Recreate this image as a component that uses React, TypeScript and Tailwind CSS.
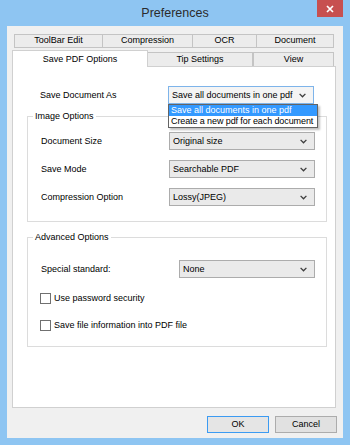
import React from "react";

const tabsTop = [
  { label: "ToolBar Edit", w: "w-[88px]" },
  { label: "Compression", w: "w-[90px]" },
  { label: "OCR", w: "w-[64px]" },
  { label: "Document", w: "w-[78px]" },
];

function Chevron() {
  return (
    <svg width="7" height="5" viewBox="0 0 7 5">
      <path d="M0.6 0.9 L3.5 3.8 L6.4 0.9" stroke="#3c3c3c" strokeWidth="1.3" fill="none" />
    </svg>
  );
}

function Combo({ value, w, focused }: { value: string; w: string; focused?: boolean }) {
  return (
    <div
      className={`flex h-[18px] ${w} items-center justify-between border pl-[3px] pr-[7px] ${
        focused ? "border-[#7eb4ea] bg-[#f4f4f4]" : "border-[#acacac] bg-[#eaeaea]"
      }`}
    >
      <span className="whitespace-nowrap leading-none">{value}</span>
      <Chevron />
    </div>
  );
}

function Row({ label, value, lw = "w-[128px]", w = "w-[146px]" }: { label: string; value: string; lw?: string; w?: string }) {
  return (
    <div className="flex items-center pl-[13px]">
      <span className={`${lw} leading-none`}>{label}</span>
      <Combo value={value} w={w} />
    </div>
  );
}

function Check({ label }: { label: string }) {
  return (
    <div className="flex h-[13px] items-center pl-[12px]">
      <div className="h-[11px] w-[11px] border border-[#707070] bg-white" />
      <span className="ml-[3px] leading-none">{label}</span>
    </div>
  );
}

export default function App() {
  return (
    <div className="flex h-[445px] w-[350px] flex-col bg-[#8ec5f2] font-['Liberation_Sans',Arial,sans-serif] text-[9px] text-black">
      {/* title bar */}
      <div className="flex h-[26px] shrink-0 items-start">
        <div className="w-[33px]" />
        <div className="flex h-[26px] flex-1 items-center justify-center text-[12.5px] text-[#2b2b2b]">Preferences</div>
        <div className="mr-[7px] flex h-[17px] w-[26px] items-center justify-center bg-[#c75050]">
          <svg width="8" height="8" viewBox="0 0 8 8">
            <path d="M1 1 L7 7 M7 1 L1 7" stroke="#fff" strokeWidth="1.7" />
          </svg>
        </div>
      </div>

      {/* client */}
      <div className="mx-[7px] mb-[7px] flex flex-1 flex-col bg-[#f0f0f0] pt-[8px]">
        <div className="ml-[5px] w-[324px]">
          {/* tab row 1 */}
          <div className="ml-[2px] flex h-[14px]">
            {tabsTop.map((t) => (
              <div
                key={t.label}
                className={`${t.w} flex items-center justify-center border border-r-0 border-[#c4c4c4] bg-[#ececec] last:border-r`}
              >
                {t.label}
              </div>
            ))}
          </div>
          {/* tab row 2 */}
          <div className="mt-[2px] flex h-[16px] items-end">
            <div className="relative z-10 -mb-px flex h-[17px] w-[136px] items-start justify-center border border-b-0 border-[#d0d0d0] bg-white pt-[2px]">
              Save PDF Options
            </div>
            <div className="flex h-[14px] w-[105px] items-center justify-center border border-b-0 border-l-0 border-[#c4c4c4] bg-[#ececec]">
              Tip Settings
            </div>
            <div className="flex h-[14px] w-[81px] items-center justify-center border border-b-0 border-[#c4c4c4] bg-[#ececec]">
              View
            </div>
          </div>

          {/* panel */}
          <div className="flex h-[342px] flex-col border border-[#d0d0d0] bg-white pl-[14px] pt-[19px]">
            <div className="flex items-center pl-[13px]">
              <span className="w-[128px] leading-none">Save Document As</span>
              <div className="relative">
                <Combo value="Save all documents in one pdf" w="w-[146px]" focused />
                <div className="absolute left-0 top-[18px] z-20 w-[150px] overflow-hidden whitespace-nowrap border border-[#646464] bg-white shadow-[2px_2px_2px_rgba(0,0,0,0.25)]">
                  <div className="flex h-[11px] items-center bg-[#3399ff] pl-[2px] leading-none text-white">Save all documents in one pdf</div>
                  <div className="flex h-[11px] items-center pl-[2px] leading-none tracking-[-0.1px]">Create a new pdf for each document</div>
                </div>
              </div>
            </div>

            <fieldset className="mt-[7px] h-[111px] w-[300px] border border-[#dcdcdc] pt-[10px]">
              <legend className="ml-[5px] px-[2px] leading-[11px]">Image Options</legend>
              <div className="flex flex-col gap-[10px]">
                <Row label="Document Size" value="Original size" />
                <Row label="Save Mode" value="Searchable PDF" />
                <Row label="Compression Option" value="Lossy(JPEG)" />
              </div>
            </fieldset>

            <fieldset className="mt-[10px] h-[115px] w-[300px] border border-[#dcdcdc] pt-[17px]">
              <legend className="ml-[5px] px-[2px] leading-[11px]">Advanced Options</legend>
              <Row label="Special standard:" value="None" lw="w-[138px]" w="w-[136px]" />
              <div className="mt-[14px] flex flex-col gap-[14px]">
                <Check label="Use password security" />
                <Check label="Save file information into PDF file" />
              </div>
            </fieldset>
          </div>
        </div>

        {/* buttons */}
        <div className="mr-[6px] mt-[8px] flex justify-end gap-[6px]">
          <button className="flex h-[17px] w-[62px] items-center justify-center border border-[#3c9bf2] bg-[#e5e5e5] leading-none">
            OK
          </button>
          <button className="flex h-[17px] w-[62px] items-center justify-center border border-[#acacac] bg-[#e1e1e1] leading-none">
            Cancel
          </button>
        </div>
      </div>
    </div>
  );
}
